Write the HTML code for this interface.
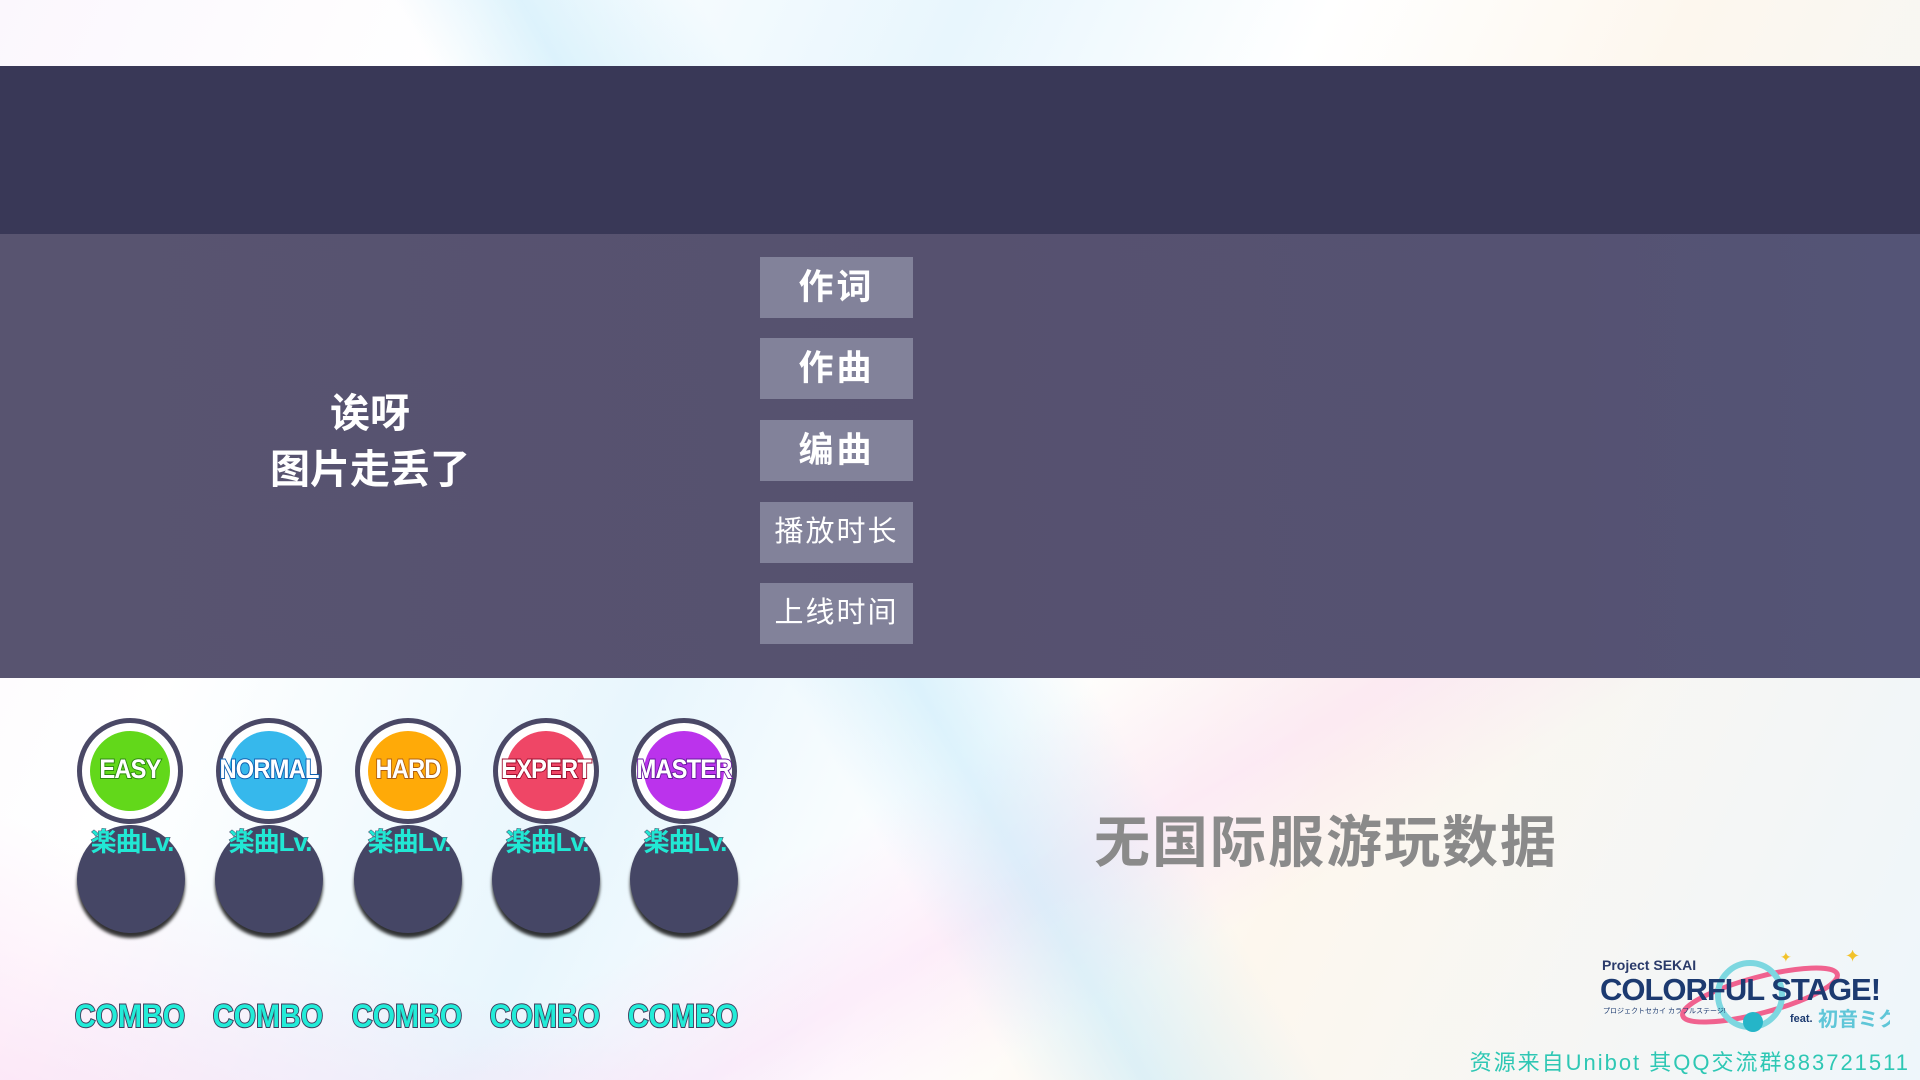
<!DOCTYPE html>
<html><head><meta charset="utf-8"><style>
*{margin:0;padding:0;box-sizing:border-box}
body{width:1920px;height:1080px;overflow:hidden;position:relative;font-family:"Liberation Sans","Noto Sans CJK SC",sans-serif;
background:linear-gradient(115deg,#fbf7fd 0%,#fff 20%,#e8f6fd 40%,#fff 55%,#fdf7ee 70%,#eef6fb 100%);}
.bg1{position:absolute;left:0;top:0;width:1920px;height:1080px;
background:
linear-gradient(60deg,transparent 40%,rgba(200,235,250,.6) 45%,transparent 52%),
linear-gradient(150deg,transparent 60%,rgba(250,220,245,.5) 68%,transparent 75%),
linear-gradient(20deg,rgba(250,210,240,.5) 0%,transparent 15%);}
.top{position:absolute;left:0;top:66px;width:1920px;height:168px;background:#393857}
.mid{position:absolute;left:0;top:234px;width:1920px;height:444px;background:linear-gradient(90deg,#585470,#56516f 50%,#555272 80%,#545476)}
.btn{position:absolute;left:760px;width:153px;height:61px;background:#82829a;color:#fff;font-size:35px;text-align:center;line-height:61px;letter-spacing:3px;font-weight:bold}
.btn.s{font-size:29px;letter-spacing:2px;font-weight:normal}
.oops{position:absolute;left:220px;width:300px;top:386px;text-align:center;color:#fff;font-size:40px;line-height:56px;font-weight:bold}
.c{position:absolute;width:106px;height:106px;border-radius:50%;background:#fff;border:5px solid #4a4866;top:718px}
.c i{position:absolute;left:8px;top:8px;width:80px;height:80px;border-radius:50%}
.c b{position:absolute;left:-20px;width:136px;top:31px;text-align:center;color:#fff;font-size:27px;font-weight:bold;letter-spacing:-1px;transform:scaleX(.88)}
.d{position:absolute;width:108px;height:108px;border-radius:50%;background:#454665;top:825px;box-shadow:0 5px 3px rgba(0,0,0,.8)}
.lv{position:absolute;width:140px;text-align:center;top:822px;font-size:26px;color:#21e8d4;font-weight:bold;letter-spacing:-1px;-webkit-text-stroke:1px #4a4866;paint-order:stroke}
.cb{position:absolute;width:140px;text-align:center;top:998px;font-size:32px;font-weight:bold;color:#22ecd8;-webkit-text-stroke:2px #3f3d5c;paint-order:stroke fill;transform:scaleX(.9)}
.nd{position:absolute;left:1094px;top:798px;font-size:56px;font-weight:bold;color:#8a8a8a;letter-spacing:2px}
.ft{position:absolute;right:10px;top:1045px;font-size:22px;color:#2ec7b4;letter-spacing:2px}
.logo{position:absolute;left:1600px;top:950px;width:290px;height:90px}
</style></head><body>
<div class="bg1"></div>
<div class="top"></div>
<div class="mid"></div>
<div class="oops">诶呀<br>图片走丢了</div>
<div class="btn" style="top:257px">作词</div>
<div class="btn" style="top:338px">作曲</div>
<div class="btn" style="top:420px">编曲</div>
<div class="btn s" style="top:502px">播放时长</div>
<div class="btn s" style="top:583px">上线时间</div>

<div class="d" style="left:77px"></div><div class="d" style="left:215px"></div><div class="d" style="left:354px"></div><div class="d" style="left:492px"></div><div class="d" style="left:630px"></div>

<div class="c" style="left:77px"><i style="background:#62d81a"></i><b style="-webkit-text-stroke:2px #2d8a10;paint-order:stroke">EASY</b></div>
<div class="c" style="left:216px"><i style="background:#36b8ec"></i><b style="-webkit-text-stroke:2px #1060b0;paint-order:stroke">NORMAL</b></div>
<div class="c" style="left:355px"><i style="background:#ffaa08"></i><b style="-webkit-text-stroke:2px #b06010;paint-order:stroke">HARD</b></div>
<div class="c" style="left:493px"><i style="background:#ef4666"></i><b style="-webkit-text-stroke:2px #a01030;paint-order:stroke">EXPERT</b></div>
<div class="c" style="left:631px"><i style="background:#bb33ec"></i><b style="-webkit-text-stroke:2px #6a1aa0;paint-order:stroke">MASTER</b></div>

<div class="lv" style="left:62px">楽曲Lv.</div><div class="lv" style="left:200px">楽曲Lv.</div><div class="lv" style="left:339px">楽曲Lv.</div><div class="lv" style="left:477px">楽曲Lv.</div><div class="lv" style="left:615px">楽曲Lv.</div>

<div class="cb" style="left:60px">COMBO</div><div class="cb" style="left:198px">COMBO</div><div class="cb" style="left:337px">COMBO</div><div class="cb" style="left:475px">COMBO</div><div class="cb" style="left:613px">COMBO</div>

<div class="nd">无国际服游玩数据</div>

<svg class="logo" viewBox="0 0 290 90">
<ellipse cx="160" cy="45" rx="80" ry="18" fill="none" stroke="#f0628f" stroke-width="5" transform="rotate(-15 160 45)"/>
<circle cx="150" cy="45" r="32" fill="none" stroke="#7dd7e0" stroke-width="6"/>
<circle cx="153" cy="72" r="10" fill="#25b5c8"/>
<text x="2" y="20" font-family="Liberation Sans" font-weight="bold" font-size="14" fill="#2a3a6a">Project SEKAI</text>
<text x="0" y="50" font-family="Liberation Sans" font-weight="bold" font-size="31" fill="#1c3a70" letter-spacing="-1">COLORFUL STAGE!</text>
<text x="3" y="63" font-family="Liberation Sans,Noto Sans CJK JP" font-size="7" fill="#1c3a70">プロジェクトセカイ カラフルステージ!</text>
<text x="190" y="72" font-family="Liberation Sans" font-weight="bold" font-size="11" fill="#1c3a70">feat.</text>
<text x="218" y="76" font-family="Noto Sans CJK JP" font-weight="bold" font-size="20" fill="#5fc6d8">初音ミク</text>
<text x="245" y="12" font-size="18" fill="#f2c22a">✦</text>
<text x="180" y="12" font-size="14" fill="#f2c22a">✦</text>
</svg>
<div class="ft">资源来自Unibot 其QQ交流群883721511</div>
</body></html>
